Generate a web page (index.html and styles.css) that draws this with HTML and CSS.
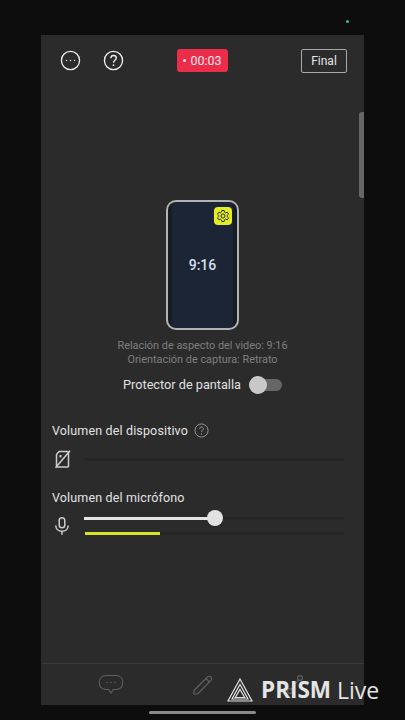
FILE: index.html
```html
<!DOCTYPE html>
<html lang="en">
<head>
    <meta charset="UTF-8">
    <meta name="viewport" content="width=device-width, initial-scale=1.0">
    <title>Captura de pantalla</title>
    <link rel="stylesheet" href="styles.css">
</head>
<body>
    <span class="status-dot"></span>

    <div class="panel">
        <!-- Top bar -->
        <div class="top-bar">
            <svg class="top-icon" viewBox="0 0 22 22" fill="none" stroke="#eee" stroke-width="1.4">
                <circle cx="11" cy="11" r="9.5"/>
                <circle cx="6.8" cy="11" r=".8" fill="#eee" stroke="none"/>
                <circle cx="11" cy="11" r=".8" fill="#eee" stroke="none"/>
                <circle cx="15.2" cy="11" r=".8" fill="#eee" stroke="none"/>
            </svg>
            <svg class="top-icon" viewBox="0 0 22 22" fill="none" stroke="#eee" stroke-width="1.4">
                <circle cx="11" cy="11" r="9.5"/>
                <path d="M8.2 8.6c0-1.7 1.3-2.8 2.9-2.8s2.8 1.1 2.8 2.6c0 2.3-2.9 2.4-2.9 4.9"/>
                <circle cx="11" cy="15.9" r=".9" fill="#eee" stroke="none"/>
            </svg>
            <div class="timer"><span class="timer-dot"></span>00:03</div>
            <button class="final-button">Final</button>
        </div>

        <!-- Preview -->
        <div class="preview">
            <div class="phone">
                <div class="phone-screen">9:16</div>
                <div class="gear-badge">
                    <svg viewBox="0 0 24 24" fill="none" stroke="#2b2b20" stroke-width="1.7" stroke-linejoin="round">
                        <path d="M10 2.500h4l.6 3 2 1.100 2.900-1 2 3.400-2.300 2a8 8 0 0 1 0 2l2.300 2-2 3.400-2.900-1-2 1.100-.6 3h-4l-.6-3-2-1.100-2.900 1-2-3.400 2.300-2a8 8 0 0 1 0-2l-2.300-2 2-3.400 2.900 1 2-1.100z"/>
                        <circle cx="12" cy="12" r="3.400"/>
                    </svg>
                </div>
            </div>
            <p class="preview-info">Relación de aspecto del video: 9:16<br>Orientación de captura: Retrato</p>
            <div class="protector-row">
                <span>Protector de pantalla</span>
                <div class="toggle"><span class="toggle-thumb"></span></div>
            </div>
        </div>

        <!-- Volume -->
        <div class="volume-section">
            <div class="volume-title">
                Volumen del dispositivo
                <svg class="help-icon" viewBox="0 0 16 16" fill="none" stroke="#999" stroke-width="1">
                    <circle cx="8" cy="8" r="7"/>
                    <path d="M6 6.300c0-1.200.9-2 2-2s2 .8 2 1.800c0 1.600-2 1.700-2 3.500"/>
                    <circle cx="8" cy="11.600" r=".7" fill="#999" stroke="none"/>
                </svg>
            </div>
            <div class="volume-row device-row">
                <svg class="volume-icon" viewBox="0 0 20 20" fill="none" stroke="#ccc" stroke-width="1.500">
                    <path d="M7 2.500h8.500a1 1 0 0 1 1 1V17a1 1 0 0 1-1 1h-10a1 1 0 0 1-1-1V5.500z"/>
                    <path d="M7.500 6h2v2.500h-2z" fill="#ccc" stroke="none"/>
                    <path d="M18 1.800 3.500 18.800"/>
                </svg>
                <div class="tracks"><div class="track"></div></div>
            </div>

            <div class="volume-title mic-title">Volumen del micrófono</div>
            <div class="volume-row">
                <svg class="volume-icon" viewBox="0 0 20 20" fill="none" stroke="#ccc" stroke-width="1.500">
                    <rect x="7.200" y="1.800" width="5.600" height="10" rx="2.800"/>
                    <path d="M3.800 9.500c0 3.600 2.700 5.700 6.200 5.700s6.200-2.100 6.200-5.700M10 15.200v3.600"/>
                </svg>
                <div class="tracks">
                    <div class="track">
                        <div class="track-fill"></div>
                        <span class="track-thumb"></span>
                    </div>
                    <div class="track level">
                        <div class="level-fill"></div>
                    </div>
                </div>
            </div>
        </div>

        <!-- Bottom bar -->
        <div class="bottom-bar">
            <svg class="chat-icon" viewBox="0 0 26 24" fill="none" stroke="#606060" stroke-width="1.100">
                <path d="M8 2.500h10c4 0 6.800 2.700 6.800 7s-2.800 7-6.800 7h-2.700L13 20l-2.300-3.500H8c-4 0-6.800-2.700-6.800-7s2.800-7 6.800-7z"/>
                <circle cx="9" cy="9.500" r=".7" fill="#606060" stroke="none"/>
                <circle cx="13" cy="9.500" r=".7" fill="#606060" stroke="none"/>
                <circle cx="17" cy="9.500" r=".7" fill="#606060" stroke="none"/>
            </svg>
            <svg class="pencil-icon" viewBox="0 0 22 22" fill="none" stroke="#606060" stroke-width="1.200" stroke-linejoin="round">
                <path d="M2 16.500 15.500 3a2.300 2.300 0 0 1 3.400 3.400L5.500 20H2z"/>
                <path d="M14 4.500 17.500 8"/>
            </svg>
            <svg class="pencil-icon" viewBox="0 0 22 22" fill="none" stroke="#606060" stroke-width="1.200">
                <circle cx="15" cy="4" r="2.400"/>
                <circle cx="5" cy="17" r="2.400"/>
                <path d="M13.500 5.900 6.500 15.100"/>
            </svg>
        </div>
    </div>

    <!-- Watermark -->
    <div class="watermark">
        <svg class="watermark-logo" viewBox="0 0 26 24" fill="none" stroke="#e4e4e4" stroke-width="1.200">
            <path d="M13 1 25 23H1z"/>
            <path d="M13 6.500 21 21H5z"/>
            <path d="M13 11.500 17.700 19.500H8.300z"/>
        </svg>
        <span class="watermark-name">PRISM</span>
        <span class="watermark-live">Live</span>
    </div>

    <div class="home-bar"></div>
</body>
</html>
```

FILE: styles.css
```css
* {
    box-sizing: border-box;
}

body {
    margin: 0;
    height: 720px;
    overflow: hidden;
    position: relative;
    padding: 35px 41px 0;
    background: #0d0d0d;
    font-family: Roboto, "Liberation Sans", sans-serif;
    color: #e6e6e6;
}

.status-dot {
    position: absolute;
    top: 20px;
    left: 346px;
    width: 3px;
    height: 3px;
    border-radius: 50%;
    background: #36c07a;
}

.panel {
    position: relative;
    width: 323px;
    height: 670px;
    display: flex;
    flex-direction: column;
    background: #2b2b2c;
}

/* scrollbar sits over the panel edge */
.panel::after {
    content: "";
    position: absolute;
    top: 77px;
    right: 0;
    width: 5px;
    height: 86px;
    border-radius: 3px 0 0 3px;
    background: #666;
}

.top-bar {
    display: flex;
    align-items: center;
    height: 51px;
    padding: 0 17px 0 19px;
}

.top-icon {
    width: 21px;
    height: 21px;
    margin-right: 22px;
}

.timer {
    display: flex;
    align-items: center;
    justify-content: center;
    width: 51px;
    height: 23px;
    margin-left: 31px;
    border-radius: 3px;
    background: #ea2e4a;
    color: #fbe9ec;
    font-size: 12.500px;
}

.timer-dot {
    width: 3px;
    height: 3px;
    margin-right: 4px;
    border-radius: 50%;
    background: #fbe9ec;
}

.final-button {
    width: 46px;
    height: 24px;
    margin-left: auto;
    padding: 0;
    border: 1px solid #a8a8a8;
    border-radius: 2px;
    background: none;
    color: #e6e6e6;
    font-family: inherit;
    font-size: 12px;
}

.preview {
    display: flex;
    flex-direction: column;
    align-items: center;
    padding-top: 114px;
}

.phone {
    position: relative;
    width: 73px;
    height: 130px;
    padding: 2px;
    border-radius: 10px;
    background: #b2b2b2;
}

.phone-screen {
    display: flex;
    align-items: center;
    justify-content: center;
    height: 100%;
    border-radius: 8px;
    background: linear-gradient(90deg, #171c25 0, #171c25 6%, #1c2536 6%, #1c2536 94%, #171c25 94%);
    color: #d8deea;
    font-size: 14px;
    font-weight: 500;
}

.gear-badge {
    position: absolute;
    top: 7px;
    right: 7px;
    display: flex;
    align-items: center;
    justify-content: center;
    width: 18px;
    height: 18px;
    border-radius: 4px;
    background: #e3ed24;
}

.gear-badge svg {
    width: 14px;
    height: 14px;
}

.preview-info {
    margin: 9px 0 0;
    color: #7f7f7f;
    font-size: 10.900px;
    line-height: 14px;
    text-align: center;
}

.protector-row {
    display: flex;
    align-items: center;
    gap: 8px;
    margin-top: 10px;
    font-size: 12.700px;
    color: #e0e0e0;
}

.toggle {
    position: relative;
    width: 33px;
    height: 12px;
    border-radius: 6px;
    background: #666;
}

.toggle-thumb {
    position: absolute;
    top: -3px;
    left: 0;
    width: 18px;
    height: 18px;
    border-radius: 50%;
    background: #c8c8c8;
}

.volume-section {
    padding: 0 20px 0 11px;
    margin-top: 29px;
}

.volume-title {
    display: flex;
    align-items: center;
    gap: 6px;
    height: 18px;
    font-size: 12.500px;
    letter-spacing: .15px;
    color: #e2e2e2;
}

.help-icon {
    width: 15px;
    height: 15px;
}

.mic-title {
    margin-top: 19px;
}

.volume-row {
    display: flex;
    align-items: flex-start;
    gap: 12px;
    margin-top: 10px;
}

.device-row {
    align-items: center;
}

.volume-icon {
    flex: none;
    width: 20px;
    height: 20px;
}

.tracks {
    flex: 1;
    padding-top: 1px;
}

.track {
    position: relative;
    height: 3px;
    background: #252526;
}

.track-fill {
    width: 50%;
    height: 3px;
    background: #e4e4e4;
}

.track-thumb {
    position: absolute;
    top: -7px;
    left: 123px;
    width: 16px;
    height: 16px;
    border-radius: 50%;
    background: #e2e2e2;
}

.level {
    margin-top: 12px;
}

.level-fill {
    width: 29%;
    height: 3px;
    margin-left: 1px;
    background: #d9e224;
}

.bottom-bar {
    display: flex;
    align-items: center;
    height: 42px;
    margin-top: auto;
    padding: 0 0 0 57px;
    border-top: 1px solid #3a3a3b;
}

.chat-icon {
    flex: none;
    width: 26px;
    height: 24px;
    margin-right: 68px;
}

.pencil-icon {
    flex: none;
    width: 22px;
    height: 22px;
    margin-right: 71px;
}

.watermark {
    position: absolute;
    top: 677px;
    left: 227px;
    display: flex;
    align-items: center;
    color: #e4e4e4;
}

.watermark-logo {
    width: 26px;
    height: 24px;
    margin-right: 8px;
}

.watermark-name {
    font-family: "Open Sans", sans-serif;
    font-size: 22.500px;
    font-weight: 700;
    line-height: 26px;
    margin-right: 6px;
}

.watermark-live {
    font-family: "Open Sans", sans-serif;
    font-size: 23px;
    line-height: 26px;
}

.home-bar {
    position: absolute;
    top: 711px;
    left: 149px;
    width: 107px;
    height: 3px;
    border-radius: 2px;
    background: #8a8a8a;
}
```
